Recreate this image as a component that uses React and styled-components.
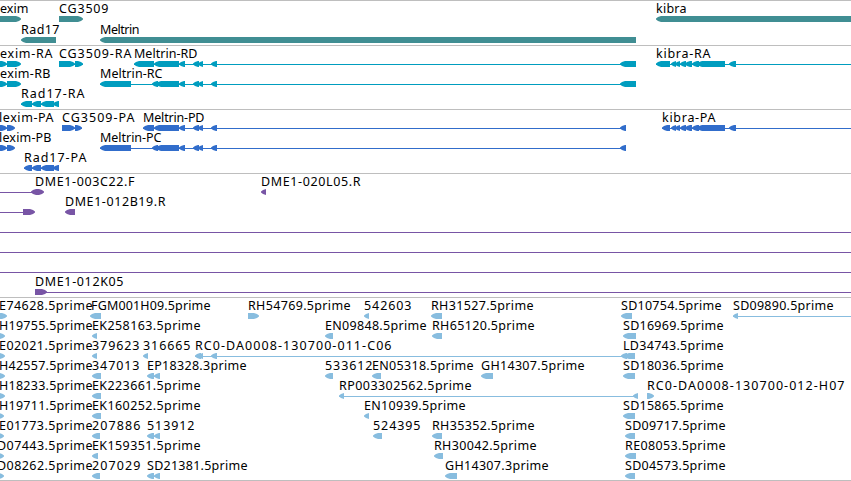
// App.jsx
import React from 'react';
import styled, { createGlobalStyle } from 'styled-components';

const GlobalStyle = createGlobalStyle`
  body {
    margin: 0;
    background-color: #fff;
    overflow: hidden;
  }
`;

const Browser = styled.main`
  display: flex;
  flex-direction: column;
  width: 851px;
  height: 481px;
  box-sizing: border-box;
  overflow: hidden;
  background-color: #fff;
  border-bottom: 1px solid #bebebe;
`;

const TrackPanel = styled.section`
  display: flex;
  flex-direction: column;
  flex: none;
  border-top: 1px solid #bebebe;
  padding-bottom: ${props => props.$gap}px;
  color: ${props => props.$color};
`;

const Lane = styled.svg`
  display: block;
  flex: none;
  width: 851px;
  height: ${props => props.$height}px;
  overflow: visible;
`;

const Label = styled.text`
  fill: #000;
  font-family: 'Noto Sans', 'Open Sans', sans-serif;
  font-size: 12.5px;
`;

const Exon = styled.polygon`
  fill: currentColor;
`;

const Intron = styled.rect`
  fill: currentColor;
`;

// labels: [text, start, end]
// lines: [start, end]
// left / right / both: [start, end] of features pointing that way
const transcriptTail = [[179, 185], [193, 199], [198, 203], [211, 217]];
const kibraExons = [[671, 676], [675, 680], [680, 686], [685, 692], [692, 699], [697, 725], [729, 736]];

const tracks = [
  {
    name: 'genes',
    color: '#408e93',
    laneHeight: 21,
    gap: 2,
    lanes: [
      {
        labels: [['exim', 0, 28], ['CG3509', 59, 108], ['kibra', 656, 686]],
        right: [[-10, 21], [59, 83]],
        left: [[656, 860]],
      },
      {
        labels: [['Rad17', 21, 59], ['Meltrin', 100, 139]],
        left: [[21, 56], [100, 636]],
      },
    ],
  },
  {
    name: 'transcripts',
    color: '#009dbf',
    lanes: [
      {
        labels: [['exim-RA', 0, 52], ['CG3509-RA', 59, 131], ['Meltrin-RD', 134, 197], ['kibra-RA', 656, 710]],
        lines: [[0, 7], [59, 83], [134, 636], [656, 851]],
        right: [[-3, 7], [7, 21], [59, 75], [75, 83]],
        left: [[134, 154], [154, 179], ...transcriptTail, [620, 636], [656, 670], ...kibraExons],
      },
      {
        labels: [['exim-RB', 0, 50], ['Meltrin-RC', 100, 162]],
        lines: [[0, 7], [100, 636]],
        right: [[-3, 7], [7, 21]],
        left: [[100, 131], [152, 158], [156, 179], ...transcriptTail, [620, 636]],
      },
      {
        labels: [['Rad17-RA', 21, 84]],
        lines: [[21, 59]],
        left: [[21, 32], [32, 41], [41, 54], [53, 59]],
      },
    ],
  },
  {
    name: 'proteins',
    color: '#316dcb',
    lanes: [
      {
        labels: [['lexim-PA', -1, 53], ['CG3509-PA', 62, 134], ['Meltrin-PD', 143, 204], ['kibra-PA', 662, 715]],
        lines: [[0, 7], [62, 82], [143, 626], [662, 851]],
        right: [[-3, 7], [7, 15], [62, 75], [75, 82]],
        left: [[143, 154], [154, 179], ...transcriptTail, [620, 626], [662, 670], ...kibraExons],
      },
      {
        labels: [['lexim-PB', -1, 51], ['Meltrin-PC', 100, 161]],
        lines: [[0, 7], [100, 626]],
        right: [[-3, 7], [7, 15]],
        left: [[100, 131], [152, 158], [156, 179], ...transcriptTail, [620, 626]],
      },
      {
        labels: [['Rad17-PA', 24, 86]],
        lines: [[24, 59]],
        left: [[24, 32], [32, 41], [41, 54], [53, 59]],
      },
    ],
  },
  {
    name: 'ends',
    color: '#7855a5',
    lanes: [
      {
        labels: [['DME1-003C22.F', 35, 134], ['DME1-020L05.R', 261, 360]],
        lines: [[0, 34]],
        both: [[31, 44]],
        left: [[261, 266]],
      },
      {
        labels: [['DME1-012B19.R', 65, 165]],
        lines: [[0, 25]],
        right: [[23, 35]],
        left: [[65, 75]],
      },
      { lines: [[0, 851]] },
      { lines: [[0, 851]] },
      { lines: [[0, 851]] },
      {
        labels: [['DME1-012K05', 35, 123]],
        lines: [[35, 851]],
        right: [[35, 47]],
      },
    ],
  },
  {
    name: 'ests',
    color: '#88bddf',
    gap: 2,
    lanes: [
      {
        labels: [
          ['E74628.5prime', -1, 92], ['FGM001H09.5prime', 91, 210], ['RH54769.5prime', 248, 350],
          ['542603', 364, 411], ['RH31527.5prime', 431, 533], ['SD10754.5prime', 621, 721],
          ['SD09890.5prime', 733, 833],
        ],
        lines: [[733, 851]],
        right: [[-4, 7], [248, 259]],
        left: [[90, 101], [364, 369], [431, 442], [621, 632], [733, 738]],
      },
      {
        labels: [
          ['H19755.5prime', -1, 92], ['EK258163.5prime', 92, 200], ['EN09848.5prime', 325, 426],
          ['RH65120.5prime', 432, 534], ['SD16969.5prime', 623, 723],
        ],
        right: [[-4, 5]],
        left: [[92, 97], [325, 333], [432, 442], [623, 636]],
      },
      {
        labels: [
          ['E02021.5prime', -1, 92], ['379623', 92, 139], ['316665', 143, 190],
          ['RC0-DA0008-130700-011-C06', 195, 391], ['LD34743.5prime', 623, 723],
        ],
        lines: [[195, 630]],
        right: [[-4, 5]],
        left: [[92, 97], [143, 148], [195, 201], [198, 203], [211, 217], [621, 627], [624, 635]],
      },
      {
        labels: [
          ['H42557.5prime', -1, 92], ['347013', 92, 139], ['EP18328.3prime', 147, 246],
          ['533612', 325, 372], ['EN05318.5prime', 372, 473], ['GH14307.5prime', 481, 584],
          ['SD18036.5prime', 623, 723],
        ],
        lines: [[150, 158]],
        right: [[-4, 5]],
        left: [[92, 101], [147, 154], [154, 160], [325, 333], [372, 381], [481, 493], [623, 635]],
      },
      {
        labels: [
          ['H18233.5prime', -1, 92], ['EK223661.5prime', 92, 200], ['RP003302562.5prime', 339, 471],
          ['RC0-DA0008-130700-012-H07', 647, 844],
        ],
        lines: [[339, 636]],
        right: [[-4, 5], [647, 654]],
        left: [[92, 101], [339, 344], [633, 638]],
      },
      {
        labels: [
          ['H19711.5prime', -1, 92], ['EK160252.5prime', 92, 200], ['EN10939.5prime', 364, 465],
          ['SD15865.5prime', 623, 723],
        ],
        right: [[-4, 4]],
        left: [[92, 101], [364, 369], [623, 635]],
      },
      {
        labels: [
          ['E01773.5prime', -1, 92], ['207886', 92, 140], ['513912', 147, 194],
          ['524395', 373, 420], ['RH35352.5prime', 432, 534], ['SD09717.5prime', 625, 725],
        ],
        lines: [[150, 158]],
        right: [[-4, 4]],
        left: [[92, 100], [147, 154], [154, 160], [373, 382], [432, 442], [625, 635]],
      },
      {
        labels: [
          ['D07443.5prime', -3, 92], ['EK159351.5prime', 92, 200], ['RH30042.5prime', 434, 536],
          ['RE08053.5prime', 625, 725],
        ],
        right: [[-4, 4]],
        left: [[92, 98], [434, 443], [625, 636]],
      },
      {
        labels: [
          ['D08262.5prime', -3, 92], ['207029', 92, 140], ['SD21381.5prime', 147, 247],
          ['GH14307.3prime', 445, 548], ['SD04573.5prime', 625, 725],
        ],
        lines: [[150, 158]],
        right: [[-4, 4]],
        left: [[92, 100], [147, 154], [154, 160], [445, 457], [625, 635]],
      },
    ],
  },
];

// features are 6px high with a slightly rounded 5px arrow head
function exonPoints(start, end, direction) {
  const top = 15;
  const bottom = 21;
  const leftSide = direction === 'right'
    ? `${start},${bottom} ${start},${top}`
    : `${start + 5},${bottom} ${start + 2},20 ${start},18.6 ${start},17.4 ${start + 2},16 ${start + 5},${top}`;
  const rightSide = direction === 'left'
    ? `${end},${top} ${end},${bottom}`
    : `${end - 5},${top} ${end - 2},16 ${end},17.4 ${end},18.6 ${end - 2},20 ${end - 5},${bottom}`;
  return `${leftSide} ${rightSide}`;
}

function FeatureLane({ lane, height }) {
  const { labels = [], lines = [] } = lane;

  return (
    <Lane $height={height}>
      {lines.map(([start, end]) => (
        <Intron key={start} x={start} y={18} width={end - start} height={1} />
      ))}
      {['left', 'right', 'both'].map(direction =>
        (lane[direction] || []).map(([start, end]) => (
          <Exon key={direction + start} points={exonPoints(start, end, direction)} />
        ))
      )}
      {labels.map(([text, start, end]) => (
        <Label key={text} x={start} y={12} textLength={end - start + 0.5}>
          {text}
        </Label>
      ))}
    </Lane>
  );
}

function App() {
  return (
    <Browser>
      <GlobalStyle />
      {tracks.map(({ name, color, lanes, laneHeight = 20, gap = 3 }) => (
        <TrackPanel key={name} $color={color} $gap={gap}>
          {lanes.map((lane, index) => (
            <FeatureLane key={index} lane={lane} height={laneHeight} />
          ))}
        </TrackPanel>
      ))}
    </Browser>
  );
}

export default App;
